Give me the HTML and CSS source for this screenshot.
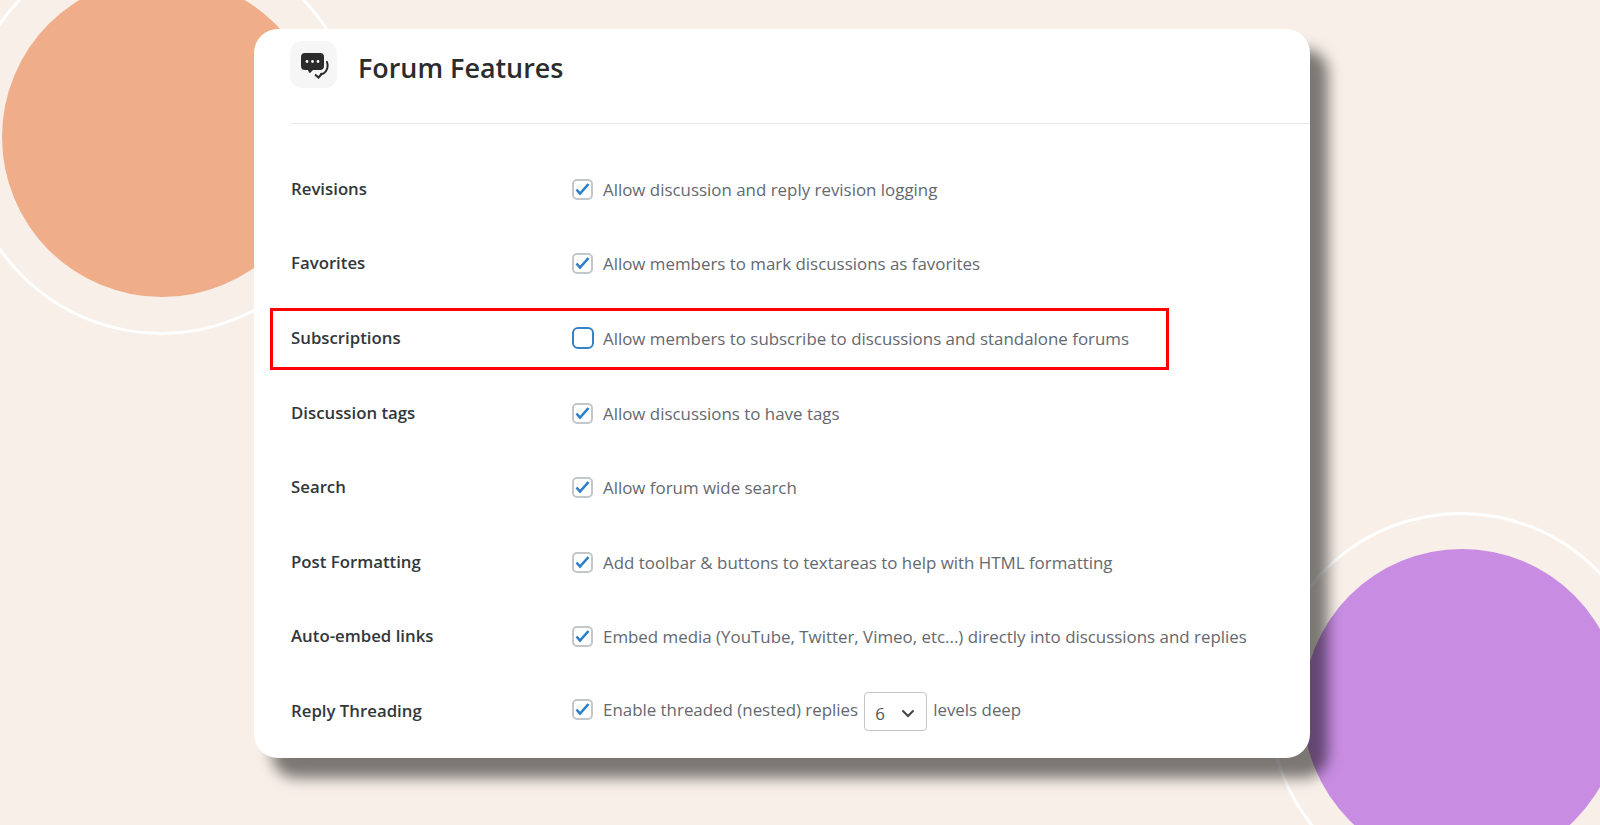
FILE: index.html
```html
<!DOCTYPE html>
<html lang="en">
<head>
    <meta charset="UTF-8">
    <meta name="viewport" content="width=device-width, initial-scale=1.0">
    <title>Forum Features</title>
    <link rel="stylesheet" href="styles.css">
</head>
<body>
    <div class="stage">
        <div class="blob blob-orange"></div>
        <div class="ring ring-orange"></div>
        <div class="ring ring-purple"></div>
        <div class="blob blob-purple"></div>

        <main class="card">
            <header class="card-head">
                <div class="head-icon">
                    <svg width="47" height="47" viewBox="0 0 47 47">
                        <path d="M15 12h15a4 4 0 0 1 4 4v9a4 4 0 0 1-4 4h-7l-3 3-1-.5-1-2.500h-3a4 4 0 0 1-4-4v-9a4 4 0 0 1 4-4z" fill="#2b2b2b"/>
                        <circle cx="17" cy="20.500" r="1.400" fill="#f6f6f6"/>
                        <circle cx="22.500" cy="20.500" r="1.400" fill="#f6f6f6"/>
                        <circle cx="28" cy="20.500" r="1.400" fill="#f6f6f6"/>
                        <path d="M37 21c1.500 4 .5 9-3.500 11.500L31 33" fill="none" stroke="#2b2b2b" stroke-width="2" stroke-linecap="round"/>
                        <path d="M25 33.500l3.500 3 3.500-4" fill="none" stroke="#2b2b2b" stroke-width="2"/>
                    </svg>
                </div>
                <h1>Forum Features</h1>
            </header>

            <div class="rows">
                <div class="row">
                    <div class="row-label">Revisions</div>
                    <div class="row-field"><span class="check"><svg viewBox="0 0 17 17"><path d="M2.500 8.500l3.500 4L14.500 3"/></svg></span><span>Allow discussion and reply revision logging</span></div>
                </div>
                <div class="row">
                    <div class="row-label">Favorites</div>
                    <div class="row-field"><span class="check"><svg viewBox="0 0 17 17"><path d="M2.500 8.500l3.500 4L14.500 3"/></svg></span><span>Allow members to mark discussions as favorites</span></div>
                </div>
                <div class="row row-marked">
                    <div class="row-label">Subscriptions</div>
                    <div class="row-field"><span class="check check-focus"></span><span>Allow members to subscribe to discussions and standalone forums</span></div>
                </div>
                <div class="row">
                    <div class="row-label">Discussion tags</div>
                    <div class="row-field"><span class="check"><svg viewBox="0 0 17 17"><path d="M2.500 8.500l3.500 4L14.500 3"/></svg></span><span>Allow discussions to have tags</span></div>
                </div>
                <div class="row">
                    <div class="row-label">Search</div>
                    <div class="row-field"><span class="check"><svg viewBox="0 0 17 17"><path d="M2.500 8.500l3.500 4L14.500 3"/></svg></span><span>Allow forum wide search</span></div>
                </div>
                <div class="row">
                    <div class="row-label">Post Formatting</div>
                    <div class="row-field"><span class="check"><svg viewBox="0 0 17 17"><path d="M2.500 8.500l3.500 4L14.500 3"/></svg></span><span>Add toolbar &amp; buttons to textareas to help with HTML formatting</span></div>
                </div>
                <div class="row">
                    <div class="row-label">Auto-embed links</div>
                    <div class="row-field"><span class="check"><svg viewBox="0 0 17 17"><path d="M2.500 8.500l3.500 4L14.500 3"/></svg></span><span>Embed media (YouTube, Twitter, Vimeo, etc...) directly into discussions and replies</span></div>
                </div>
                <div class="row">
                    <div class="row-label">Reply Threading</div>
                    <div class="row-field row-field-select">
                        <span class="check"><svg viewBox="0 0 17 17"><path d="M2.500 8.500l3.500 4L14.500 3"/></svg></span>
                        <span>Enable threaded (nested) replies</span>
                        <span class="select">6<svg width="14" height="9" viewBox="0 0 14 9"><path d="M1.500 1.500L7 7l5.500-5.500"/></svg></span>
                        <span>levels deep</span>
                    </div>
                </div>
            </div>
        </main>
    </div>
</body>
</html>
```

FILE: styles.css
```css
body {
    margin: 0;
    font-family: "Open Sans", "Noto Sans", sans-serif;
}

.stage {
    position: relative;
    height: 825px;
    box-sizing: border-box;
    padding: 29px 0 0 254px;
    overflow: hidden;
    background-color: #f7efe8;
}

/* background decoration */
.blob, .ring {
    position: absolute;
    border-radius: 50%;
    box-sizing: border-box;
}

.blob-orange {
    left: 2px;
    top: -23px;
    width: 320px;
    height: 320px;
    background: #efad89;
}

.ring-orange {
    left: -37px;
    top: -62px;
    width: 397px;
    height: 397px;
    border: 3px solid #fff;
}

.blob-purple {
    left: 1303px;
    top: 549px;
    width: 318px;
    height: 318px;
    background: #c88de3;
}

.ring-purple {
    left: 1268px;
    top: 512px;
    width: 386px;
    height: 386px;
    border: 3px solid #fff;
}

.card {
    position: relative;
    box-sizing: border-box;
    width: 1056px;
    height: 729px;
    padding-left: 36px;
    background: #fff;
    border-radius: 24px;
    box-shadow: 18px 20px 14px rgba(0, 0, 0, 0.5);
}

.card-head {
    display: flex;
    align-items: center;
    gap: 21px;
    box-sizing: border-box;
    height: 95px;
    padding: 12px 0 35px;
    margin-left: 1px;
    border-bottom: 1px solid #e8e8e8;
}

.head-icon {
    width: 47px;
    height: 47px;
    margin-left: -1px;
    background: #f6f6f6;
    border-radius: 12px;
}

.card-head h1 {
    margin: 0;
    padding-top: 6px;
    font-size: 26.900px;
    font-weight: 600;
    color: #2c2c2c;
}

.rows {
    padding-top: 28px;
}

.row {
    display: flex;
    align-items: center;
    height: 74.600px;
    position: relative;
}

.row-label {
    box-sizing: border-box;
    width: 282px;
    padding: 0 0 2px 1px;
    font-size: 16.800px;
    font-weight: 600;
    color: #32373c;
}

.row-field {
    display: flex;
    align-items: center;
    font-size: 16.900px;
    color: #646970;
    white-space: nowrap;
}

.row-field-select {
    margin-bottom: 3px;
}

.row-marked::after {
    content: "";
    position: absolute;
    left: -20px;
    top: 7px;
    width: 899px;
    height: 62px;
    box-sizing: border-box;
    border: 3px solid #f00;
}

.check {
    flex: none;
    width: 21px;
    height: 21px;
    box-sizing: border-box;
    margin-right: 10px;
    border: 2px solid #c4c7c9;
    border-radius: 5px;
    background: #fff;
}

.check svg {
    display: block;
    width: 17px;
    height: 17px;
    fill: none;
    stroke: #2b7fc9;
    stroke-width: 2.600;
}

.check-focus {
    width: 22px;
    height: 22px;
    margin-right: 9px;
    border-color: #3582c4;
    border-radius: 6px;
}

.select {
    display: flex;
    align-items: center;
    justify-content: space-between;
    box-sizing: border-box;
    width: 63px;
    height: 39px;
    margin: 3px 6px 0;
    padding: 4px 11px 0 10px;
    border: 1.500px solid #c4c4c4;
    border-radius: 4px;
    color: #50575e;
}

.select svg {
    fill: none;
    stroke: #444;
    stroke-width: 2;
}
```
